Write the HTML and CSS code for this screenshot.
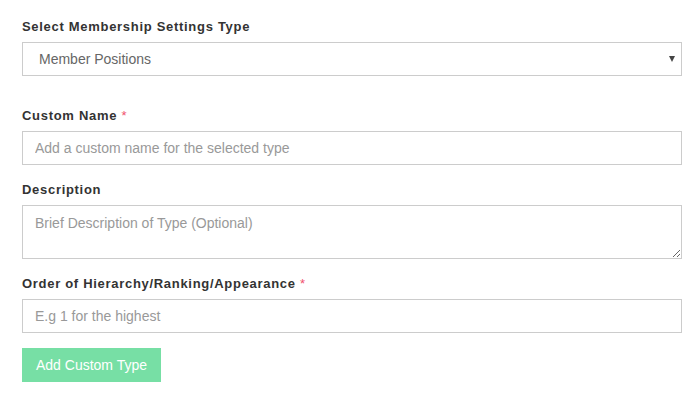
FILE: index.html
```html
<!DOCTYPE html>
<html lang="en">
<head>
    <meta charset="UTF-8">
    <meta name="viewport" content="width=device-width, initial-scale=1.0">
    <title>Membership Settings</title>
    <link rel="stylesheet" href="styles.css">
</head>
<body>
    <form class="settings-form">
        <div class="form-group form-group-first">
            <label for="settings-type">Select Membership Settings Type</label>
            <div class="select-wrap">
                <select id="settings-type">
                    <option>Member Positions</option>
                </select>
            </div>
        </div>
        <div class="form-group">
            <label for="custom-name">Custom Name <span class="required">*</span></label>
            <input type="text" id="custom-name" placeholder="Add a custom name for the selected type">
        </div>
        <div class="form-group">
            <label for="description">Description</label>
            <textarea id="description" placeholder="Brief Description of Type (Optional)"></textarea>
        </div>
        <div class="form-group form-group-last">
            <label for="order">Order of Hierarchy/Ranking/Appearance <span class="required">*</span></label>
            <input type="text" id="order" placeholder="E.g 1 for the highest">
        </div>
        <button type="button" class="submit-btn" disabled>Add Custom Type</button>
    </form>
</body>
</html>
```

FILE: styles.css
```css
* {
    margin: 0;
    padding: 0;
    box-sizing: border-box;
}

body {
    font-family: "Liberation Sans", Arial, sans-serif;
    background-color: #fff;
    color: #333;
    padding: 18px 13px 0 22px;
}

.settings-form {
    display: flex;
    flex-direction: column;
}

.form-group {
    margin-bottom: 16px;
}

.form-group-first {
    margin-bottom: 31px;
}

.form-group-last {
    margin-bottom: 15px;
}

label {
    display: block;
    font-size: 13px;
    font-weight: bold;
    line-height: 18px;
    letter-spacing: 0.7px;
    margin-bottom: 6px;
    color: #333;
}

.required {
    color: #f0506e;
    font-weight: normal;
}

input, select, textarea {
    display: block;
    width: 100%;
    font-family: inherit;
    font-size: 14px;
    color: #555;
    background-color: #fff;
    border: 1px solid #ccc;
    border-radius: 0;
    outline: none;
}

input {
    height: 34px;
    padding: 0 12px;
}

input::placeholder, textarea::placeholder {
    color: #999;
}

.select-wrap {
    position: relative;
}

select {
    height: 34px;
    padding: 0 16px;
    appearance: none;
    -webkit-appearance: none;
    color: #666;
}

.select-wrap::after {
    content: "";
    position: absolute;
    right: 7px;
    top: 14px;
    border-left: 3px solid transparent;
    border-right: 3px solid transparent;
    border-top: 6px solid #444;
}

textarea {
    height: 54px;
    padding: 8px 12px;
    line-height: 18px;
}

.submit-btn {
    align-self: flex-start;
    width: 139px;
    height: 34px;
    font-family: inherit;
    font-size: 14px;
    color: #fff;
    background-color: #77dfa5;
    border: none;
}
```
